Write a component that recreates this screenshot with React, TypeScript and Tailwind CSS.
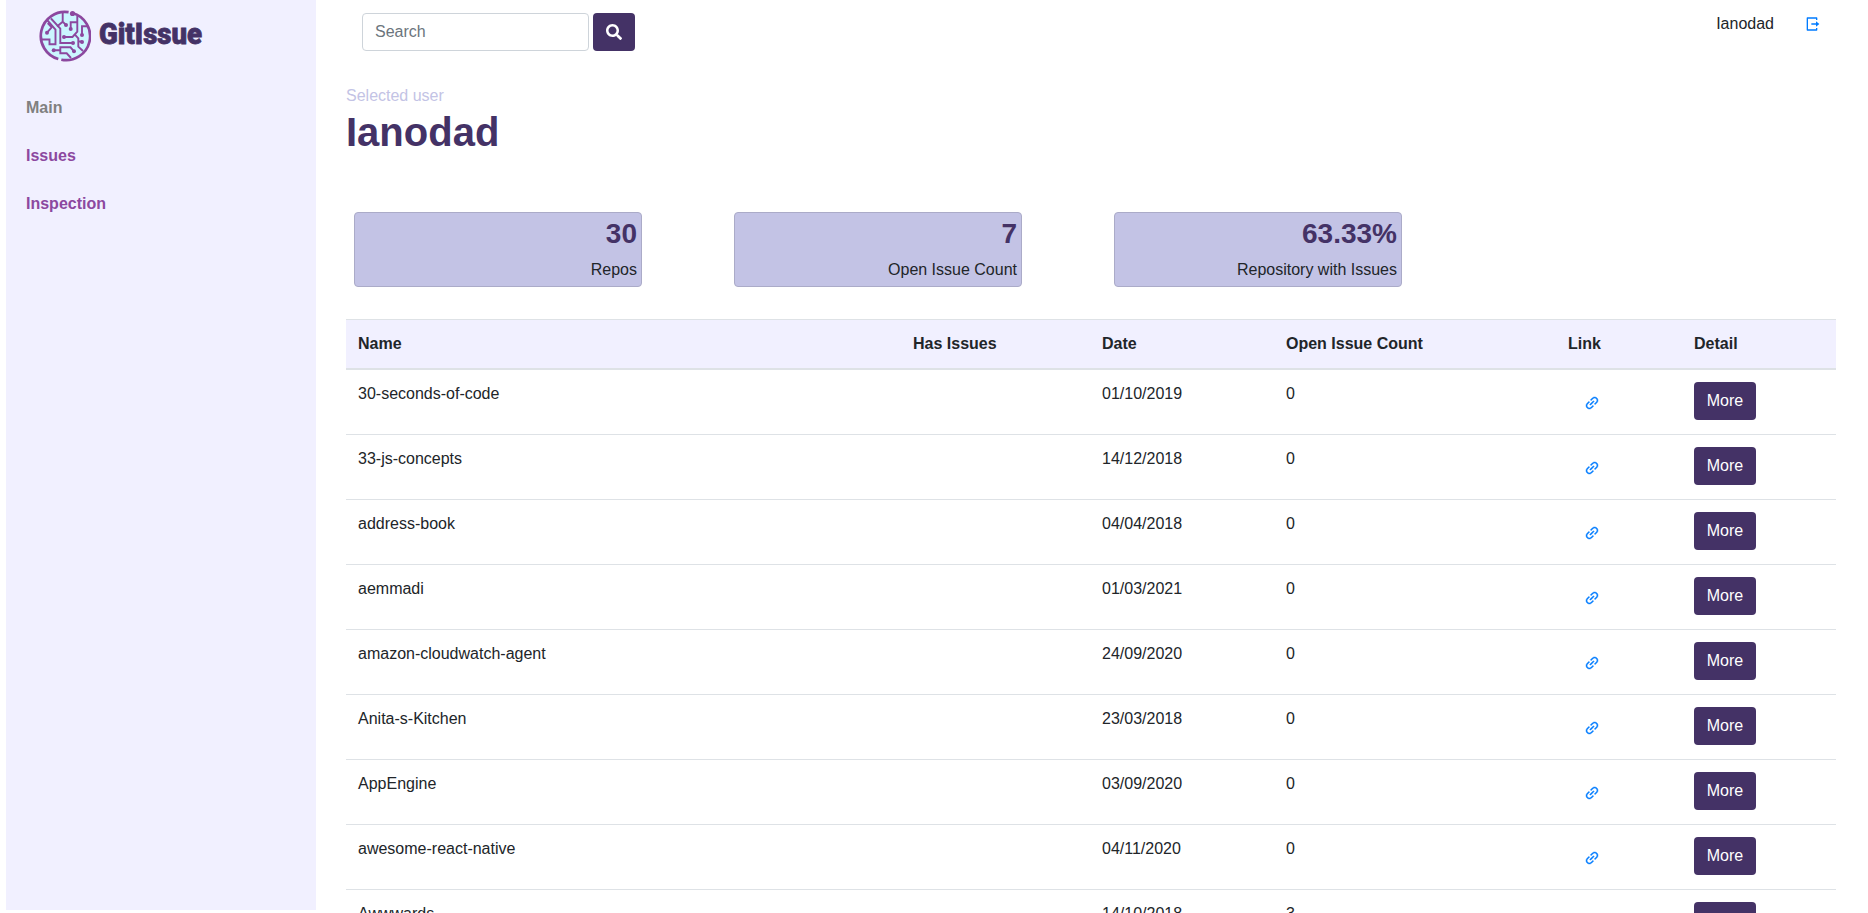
import { FaSearch } from "react-icons/fa";
import { AiOutlineLink } from "react-icons/ai";
import { RiLogoutBoxRLine } from "react-icons/ri";

const rows = [
  ["30-seconds-of-code", "01/10/2019", "0"],
  ["33-js-concepts", "14/12/2018", "0"],
  ["address-book", "04/04/2018", "0"],
  ["aemmadi", "01/03/2021", "0"],
  ["amazon-cloudwatch-agent", "24/09/2020", "0"],
  ["Anita-s-Kitchen", "23/03/2018", "0"],
  ["AppEngine", "03/09/2020", "0"],
  ["awesome-react-native", "04/11/2020", "0"],
  ["Awwwards", "14/10/2018", "3"],
];

const stats = [
  ["30", "Repos"],
  ["7", "Open Issue Count"],
  ["63.33%", "Repository with Issues"],
];

const columns = "grid grid-cols-[555px_189px_184px_282px_126px_154px]";

function Logo() {
  return (
    <svg className="block h-[52px] w-[52px] shrink-0" viewBox="0 0 52 52" fill="none">
      <circle cx="26.3" cy="26" r="23.5" fill="#cbf6ff" />
      <g stroke="#8c489f" strokeWidth="2.7">
        <path d="M29.6 2.2A24 24 0 0 0 19.3 49" />
        <path d="M22.300 49.700A24 24 0 0 0 33.300 3" />
      </g>
      <g stroke="#8c489f" strokeWidth="1.9">
        <path d="M23.700 2.700V11.700L27 15M23.700 11.700L18 16.500" />
        <path d="M12 8.500L21.300 18.500V33H34" />
        <path d="M8.500 10.500L16.500 19.500V34.300H10.500V29.500H3" />
        <path d="M8 22.700L12.700 17.300L8.700 13" />
        <path d="M31.700 19V12.300H38.300M38.300 6V21.700L33.500 27H25" />
        <path d="M35.700 24.300L39.300 28.300V36.700L44 41M39.300 31.500H43" />
        <path d="M43 25V16.300H48" />
        <path d="M14.700 40.300H21.300M35 41.300L31.500 37.300H21.300V43.300H27.700L32 48" />
      </g>
      <g fill="#8c489f">
        <circle cx="33.500" cy="3.500" r="2.600" />
        <circle cx="27" cy="15" r="2" />
        <circle cx="8" cy="22.700" r="2" />
        <circle cx="31.700" cy="19" r="2" />
        <circle cx="25" cy="27" r="2" />
        <circle cx="34" cy="33" r="2" />
        <circle cx="43" cy="25" r="2" />
        <circle cx="43" cy="32" r="2" />
        <circle cx="14.700" cy="40.300" r="2" />
        <circle cx="35" cy="41.300" r="2" />
      </g>
    </svg>
  );
}

export default function App() {
  return (
    <div className="flex h-[913px] w-full overflow-hidden bg-white pl-[6px] font-['Liberation_Sans',Arial,sans-serif] text-base text-[#212529]">
      <aside className="h-[910px] w-[310px] shrink-0 bg-[#f1f0ff]">
        <div className="flex h-[86px] items-start pt-[10px] pl-[33px]">
          <Logo />
          <svg className="mt-1 ml-2 h-[40px] w-[110px]" viewBox="0 0 110 40">
            <text x="0" y="29.5" textLength="103" lengthAdjust="spacingAndGlyphs" fill="#443266" stroke="#443266" strokeWidth="0.8" className="font-['Roboto',sans-serif] text-[29px] font-black">GitIssue</text>
          </svg>
        </div>
        <nav className="flex flex-col gap-6 pt-[10px] pl-5 font-bold leading-6 text-[#8c489f]">
          <a className="text-[#808080]">Main</a>
          <a>Issues</a>
          <a>Inspection</a>
        </nav>
      </aside>
      <main className="ml-[30px] w-[1490px] shrink-0">
        <header className="flex h-[84px] items-start pt-[13px] pl-4">
          <input placeholder="Search" className="h-[38px] w-[227px] rounded border border-[#ced4da] px-3 placeholder:text-[#6c757d]" />
          <button className="ml-1 flex h-[38px] w-[42px] items-center justify-center rounded bg-[#443266] text-white">
            <FaSearch size={16} />
          </button>
          <span className="ml-auto leading-[22px]">Ianodad</span>
          <RiLogoutBoxRLine size={16} className="mt-[3px] mr-[16px] ml-[30px] text-[#007bff]" />
        </header>
        <div className="leading-6 text-[#c3c3e5]">Selected user</div>
        <h1 className="h-[104px] text-[40px] leading-[48px] font-bold text-[#443266]">Ianodad</h1>
        <section className="flex gap-[92px] pl-2">
          {stats.map(([value, label]) => (
            <div key={label} className="h-[75px] w-[288px] rounded border border-[#ababc8] bg-[#c3c3e5] px-1 pt-1 text-right">
              <div className="text-[28px] leading-[34px] font-bold text-[#443266]">{value}</div>
              <div className="mt-[7px] leading-6">{label}</div>
            </div>
          ))}
        </section>
        <section className="mt-8">
          <div className={`${columns} h-[51px] border-t border-b-2 border-t-[#dee2e6] border-b-[#dee2e6] bg-[#f1f0ff] pt-3 leading-6 font-bold *:pl-3`}>
            <span>Name</span>
            <span>Has Issues</span>
            <span>Date</span>
            <span>Open Issue Count</span>
            <span>Link</span>
            <span>Detail</span>
          </div>
          {rows.map(([name, date, count]) => (
            <div key={name} className={`${columns} h-[65px] border-b border-[#dee2e6] pt-3 leading-6 *:pl-3`}>
              <span>{name}</span>
              <span />
              <span>{date}</span>
              <span>{count}</span>
              <span className="flex pt-[13px]">
                <AiOutlineLink size={16} className="ml-4 stroke-[28] text-[#007bff]" />
              </span>
              <span>
                <button className="h-[38px] w-[62px] rounded bg-[#443266] text-white">More</button>
              </span>
            </div>
          ))}
        </section>
      </main>
    </div>
  );
}
